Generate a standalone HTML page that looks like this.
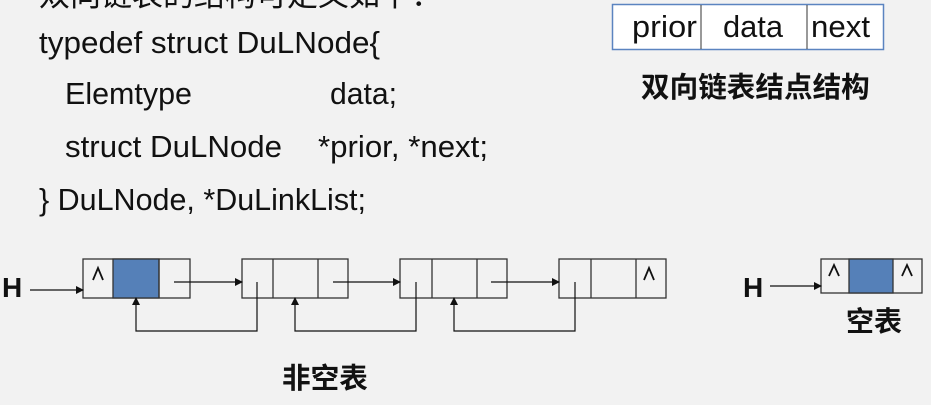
<!DOCTYPE html>
<html><head><meta charset="utf-8"><style>
html,body{margin:0;padding:0;background:#f2f2f2;width:931px;height:405px;overflow:hidden}
svg{display:block}
.c{font-family:"Liberation Sans","Noto Sans CJK SC",sans-serif;font-size:31px;fill:#111}
.b{font-family:"Liberation Sans","Noto Sans CJK SC",sans-serif;font-weight:bold;fill:#111}
</style></head><body>
<svg width="931" height="405" viewBox="0 0 931 405" xmlns="http://www.w3.org/2000/svg">
<defs><marker id="a" markerWidth="8" markerHeight="8" refX="7" refY="4" orient="auto" markerUnits="userSpaceOnUse"><path d="M0,0 L8,4 L0,8 z" fill="#111"/></marker></defs>
<text class="c" x="39" y="6">双向链表的结构可定义如下：</text>
<text class="c" x="39" y="53" textLength="341" lengthAdjust="spacingAndGlyphs">typedef struct DuLNode{</text>
<text class="c" x="65" y="104" textLength="127" lengthAdjust="spacingAndGlyphs">Elemtype</text>
<text class="c" x="330" y="104" textLength="67" lengthAdjust="spacingAndGlyphs">data;</text>
<text class="c" x="65" y="157" textLength="217" lengthAdjust="spacingAndGlyphs">struct DuLNode</text>
<text class="c" x="318" y="157" textLength="170" lengthAdjust="spacingAndGlyphs">*prior, *next;</text>
<text class="c" x="39" y="210" textLength="327" lengthAdjust="spacingAndGlyphs">} DuLNode, *DuLinkList;</text>

<rect x="612.5" y="4.5" width="271" height="45" fill="#fff" stroke="#5b84c0" stroke-width="1.5"/>
<line x1="701" y1="5" x2="701" y2="49" stroke="#333"/>
<line x1="807" y1="5" x2="807" y2="49" stroke="#333"/>
<text class="c" x="632" y="37" textLength="65" lengthAdjust="spacingAndGlyphs">prior</text>
<text class="c" x="723" y="37" textLength="60" lengthAdjust="spacingAndGlyphs">data</text>
<text class="c" x="811" y="37" textLength="59" lengthAdjust="spacingAndGlyphs">next</text>
<text class="b" x="641" y="97" font-size="28.6">双向链表结点结构</text>

<g stroke="#333" stroke-width="1.3" fill="#f2f2f2">
<rect x="83" y="259" width="107" height="39"/>
<rect x="113" y="259" width="46" height="39" fill="#5580b8"/>
<line x1="159" y1="259" x2="159" y2="298"/>
<rect x="242" y="259" width="106" height="39"/><line x1="273" y1="259" x2="273" y2="298"/><line x1="318" y1="259" x2="318" y2="298"/>
<rect x="400" y="259" width="107" height="39"/><line x1="432" y1="259" x2="432" y2="298"/><line x1="477" y1="259" x2="477" y2="298"/>
<rect x="559" y="259" width="107" height="39"/><line x1="591" y1="259" x2="591" y2="298"/><line x1="636" y1="259" x2="636" y2="298"/>
<rect x="821" y="259" width="101" height="34"/>
<rect x="849" y="259" width="44" height="34" fill="#5580b8"/>
</g>
<g stroke="#111" stroke-width="1.2" fill="none">
<line x1="30" y1="290" x2="83" y2="290" marker-end="url(#a)"/>
<line x1="174" y1="282" x2="242" y2="282" marker-end="url(#a)"/>
<line x1="333" y1="282" x2="400" y2="282" marker-end="url(#a)"/>
<line x1="491" y1="282" x2="559" y2="282" marker-end="url(#a)"/>
<path d="M257,282 V331 H136 V298" marker-end="url(#a)"/>
<path d="M416,282 V331 H295 V298" marker-end="url(#a)"/>
<path d="M575,282 V331 H454 V298" marker-end="url(#a)"/>
<line x1="770" y1="286" x2="821" y2="286" marker-end="url(#a)"/>
</g>
<g stroke="#111" stroke-width="1.8" fill="none">
<path d="M93,280 L98,268 L103,280"/>
<path d="M644,280 L649,268 L654,280"/>
<path d="M829,276 L834,265 L839,276"/>
<path d="M902,276 L907,265 L912,276"/>
</g>
<text class="b" x="2" y="297" font-size="28">H</text>
<text class="b" x="743" y="297" font-size="28">H</text>
<text class="b" x="282" y="388" font-size="28.6">非空表</text>
<text class="b" x="846" y="331" font-size="28">空表</text>
</svg>
</body></html>
